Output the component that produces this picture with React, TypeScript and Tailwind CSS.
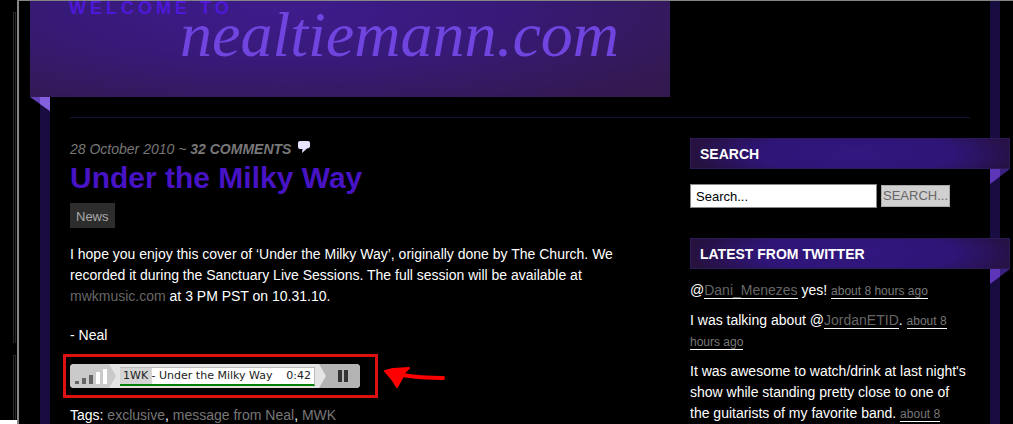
import React from "react";

function SideHeading({ children }: { children: React.ReactNode }) {
  return (
    <div className="relative -mr-10">
      <h2 className="h-[31px] border border-[#2b1a55] bg-[radial-gradient(ellipse_52%_130%_at_52%_50%,#32177f_0%,#2e1576_60%,#26113f_100%)] px-[9px] text-sm leading-[30px] font-bold text-white uppercase">
        {children}
      </h2>
      <svg className="absolute top-full right-0 h-[15px] w-5" viewBox="0 0 20 15" aria-hidden="true">
        <path d="M0 0H20L0 15Z" fill="#3a2080" />
        <path d="M0 0H10V7.5L0 15Z" fill="#5d35b8" />
      </svg>
    </div>
  );
}

function Tweet({ children }: { children: React.ReactNode }) {
  return <li className="mb-[9px] leading-[21px]">{children}</li>;
}

function Ago() {
  return (
    <a href="#" className="border-b border-white text-xs text-[#777]">
      about 8 hours ago
    </a>
  );
}

function Player() {
  return (
    <div className="flex h-6 w-[290px] overflow-hidden rounded bg-[#e4e4e4]">
      <button type="button" aria-label="Volume" className="shrink-0">
        <svg width="47" height="24" viewBox="0 0 47 24" aria-hidden="true">
          <path d="M0 0H39L46 12L39 24H0Z" fill="#cacaca" />
          <path d="M5 17h4v3H5zM12 14h4v6h-4zM19 11h4v9h-4z" fill="#666" />
          <path d="M26 8h4v12h-4zM33 5h4v15h-4z" fill="#fff" />
        </svg>
      </button>
      <div className="mt-[3px] ml-[3px] flex h-[19px] flex-1 items-center justify-between border-t border-r border-b-2 border-t-[#bbb] border-r-[#bbb] border-b-[#087f08] bg-[linear-gradient(to_right,#d4d4d4_32px,#fff_32px)] px-[3px] font-['DejaVu_Sans',sans-serif] text-[11px] leading-4 whitespace-nowrap text-[#222]">
        <span>1WK - Under the Milky Way</span>
        <span>0:42</span>
      </div>
      <button type="button" aria-label="Pause" className="shrink-0">
        <svg width="45" height="24" viewBox="0 0 45 24" aria-hidden="true">
          <path d="M4 0H45V24H4L11 12Z" fill="#b4b4b4" />
          <path d="M23 6h4v12h-4zM29 6h4v12h-4z" fill="#333" />
        </svg>
      </button>
    </div>
  );
}

export default function App() {
  return (
    <div className="flex h-screen overflow-hidden bg-black font-['Liberation_Sans',Arial,sans-serif] text-sm text-white">
      <div className="flex w-[17px] shrink-0 flex-col" aria-hidden="true">
        <div className="mt-3 ml-[13px] h-[331px] w-[3px] shrink-0 border-x border-t border-[#292929]" />
        <div className="mt-3 ml-[13px] w-[3px] flex-1 border-x border-t border-[#292929]" />
        <div className="h-1 bg-white" />
      </div>

      <div className="min-w-0 flex-1 border-t border-l-2 border-[#858585]">
        <div className="mr-[13px] ml-[21px] min-h-full border-x-[10px] border-[#190c40]">
          <header className="relative -ml-5 h-24 w-[640px] max-w-full bg-[radial-gradient(ellipse_75%_120%_at_40%_10%,#3e1c8c_0%,#371a78_45%,#33194f_100%)]">
            <p className="pl-[39px] text-lg leading-[14px] font-bold tracking-[4px] text-[#4f18d8]">WELCOME TO</p>
            <h1 className="pl-[150px] font-['Liberation_Serif',serif] text-[64px] leading-[40px] whitespace-nowrap text-[#7045df] italic">
              nealtiemann.com
            </h1>
            <svg className="absolute top-full left-0 h-[14px] w-5" viewBox="0 0 20 14" aria-hidden="true">
              <path d="M0 0H20V14Z" fill="#6240b8" />
              <path d="M10 0H20V14L10 7Z" fill="#8260df" />
            </svg>
          </header>

          <div className="mx-5 mt-5 border-t border-[#141033] pt-5">
            <div className="flex gap-5">
              <main className="min-w-0 flex-1">
                <p className="flex items-center leading-[22px] text-[#777] italic">
                  <span>
                    28 October 2010 ~{" "}
                    <a href="#" className="font-bold">
                      32 COMMENTS
                    </a>
                  </span>
                  <svg className="mb-1 ml-[6px]" width="13" height="12" viewBox="0 0 13 12" aria-hidden="true">
                    <path d="M3 0H11Q13 0 13 2V5Q13 7 10 7.500L5 12L5.500 8H3Q1 8 1 6V2Q1 0 3 0Z" fill="#e8e2ff" />
                  </svg>
                </p>
                <h2 className="text-[30px] leading-[36px] font-bold text-[#4713c4]">Under the Milky Way</h2>
                <a href="#" className="mt-[7px] block h-[25px] w-fit bg-[#2d2d2d] px-[6px] text-[13px] leading-[27px] text-[#aaa]">
                  News
                </a>
                <p className="mt-4 max-w-[570px] leading-[21px]">
                  I hope you enjoy this cover of ‘Under the Milky Way’, originally done by The Church. We recorded it during
                  the Sanctuary Live Sessions. The full session will be available at{" "}
                  <a href="#" className="text-[#666]">
                    mwkmusic.com
                  </a>{" "}
                  at 3 PM PST on 10.31.10.
                </p>
                <p className="mt-[18px] leading-[21px]">- Neal</p>
                <div className="mt-2 -ml-[7px] flex items-center gap-[6px]">
                  <div className="border-[3px] border-[#df1010] py-[7px] pr-[15px] pl-1">
                    <Player />
                  </div>
                  <svg width="62" height="24" viewBox="0 0 62 24" aria-hidden="true">
                    <path d="M1 7L9 5L25 4L20 9L18 14L13 23L8 15Z" fill="#f00" stroke="#f00" strokeWidth="2" strokeLinejoin="round" />
                    <path d="M18 11Q36 14 59 14" fill="none" stroke="#f00" strokeWidth="4" strokeLinecap="round" />
                  </svg>
                </div>
                <p className="mt-[7px] leading-[21px] whitespace-nowrap">
                  Tags:{" "}
                  <a href="#" className="text-[#777]">
                    exclusive
                  </a>
                  ,{" "}
                  <a href="#" className="text-[#777]">
                    message from Neal
                  </a>
                  ,{" "}
                  <a href="#" className="text-[#777]">
                    MWK
                  </a>
                </p>
              </main>

              <aside className="w-[280px] shrink-0">
                <SideHeading>Search</SideHeading>
                <form className="mt-[15px] flex items-center gap-1" onSubmit={(e) => e.preventDefault()}>
                  <input
                    type="text"
                    aria-label="Search"
                    defaultValue="Search..."
                    className="h-6 w-[187px] border border-[#888] bg-white px-[5px] text-[13px] text-black"
                  />
                  <button
                    type="submit"
                    className="h-[22px] border border-[#aaa] bg-[#d0d0d0] px-px text-[13px] leading-5 text-[#666]"
                  >
                    SEARCH...
                  </button>
                </form>
                <div className="mt-[30px]">
                  <SideHeading>Latest from Twitter</SideHeading>
                </div>
                <ul className="mt-[11px]">
                  <Tweet>
                    @
                    <a href="#" className="border-b border-white text-[#666]">
                      Dani_Menezes
                    </a>{" "}
                    yes! <Ago />
                  </Tweet>
                  <Tweet>
                    I was talking about @
                    <a href="#" className="border-b border-white text-[#666]">
                      JordanETID
                    </a>
                    . <Ago />
                  </Tweet>
                  <Tweet>
                    It was awesome to watch/drink at last night's show while standing pretty close to one of the guitarists of
                    my favorite band. <Ago />
                  </Tweet>
                </ul>
              </aside>
            </div>
          </div>
        </div>
      </div>
    </div>
  );
}
